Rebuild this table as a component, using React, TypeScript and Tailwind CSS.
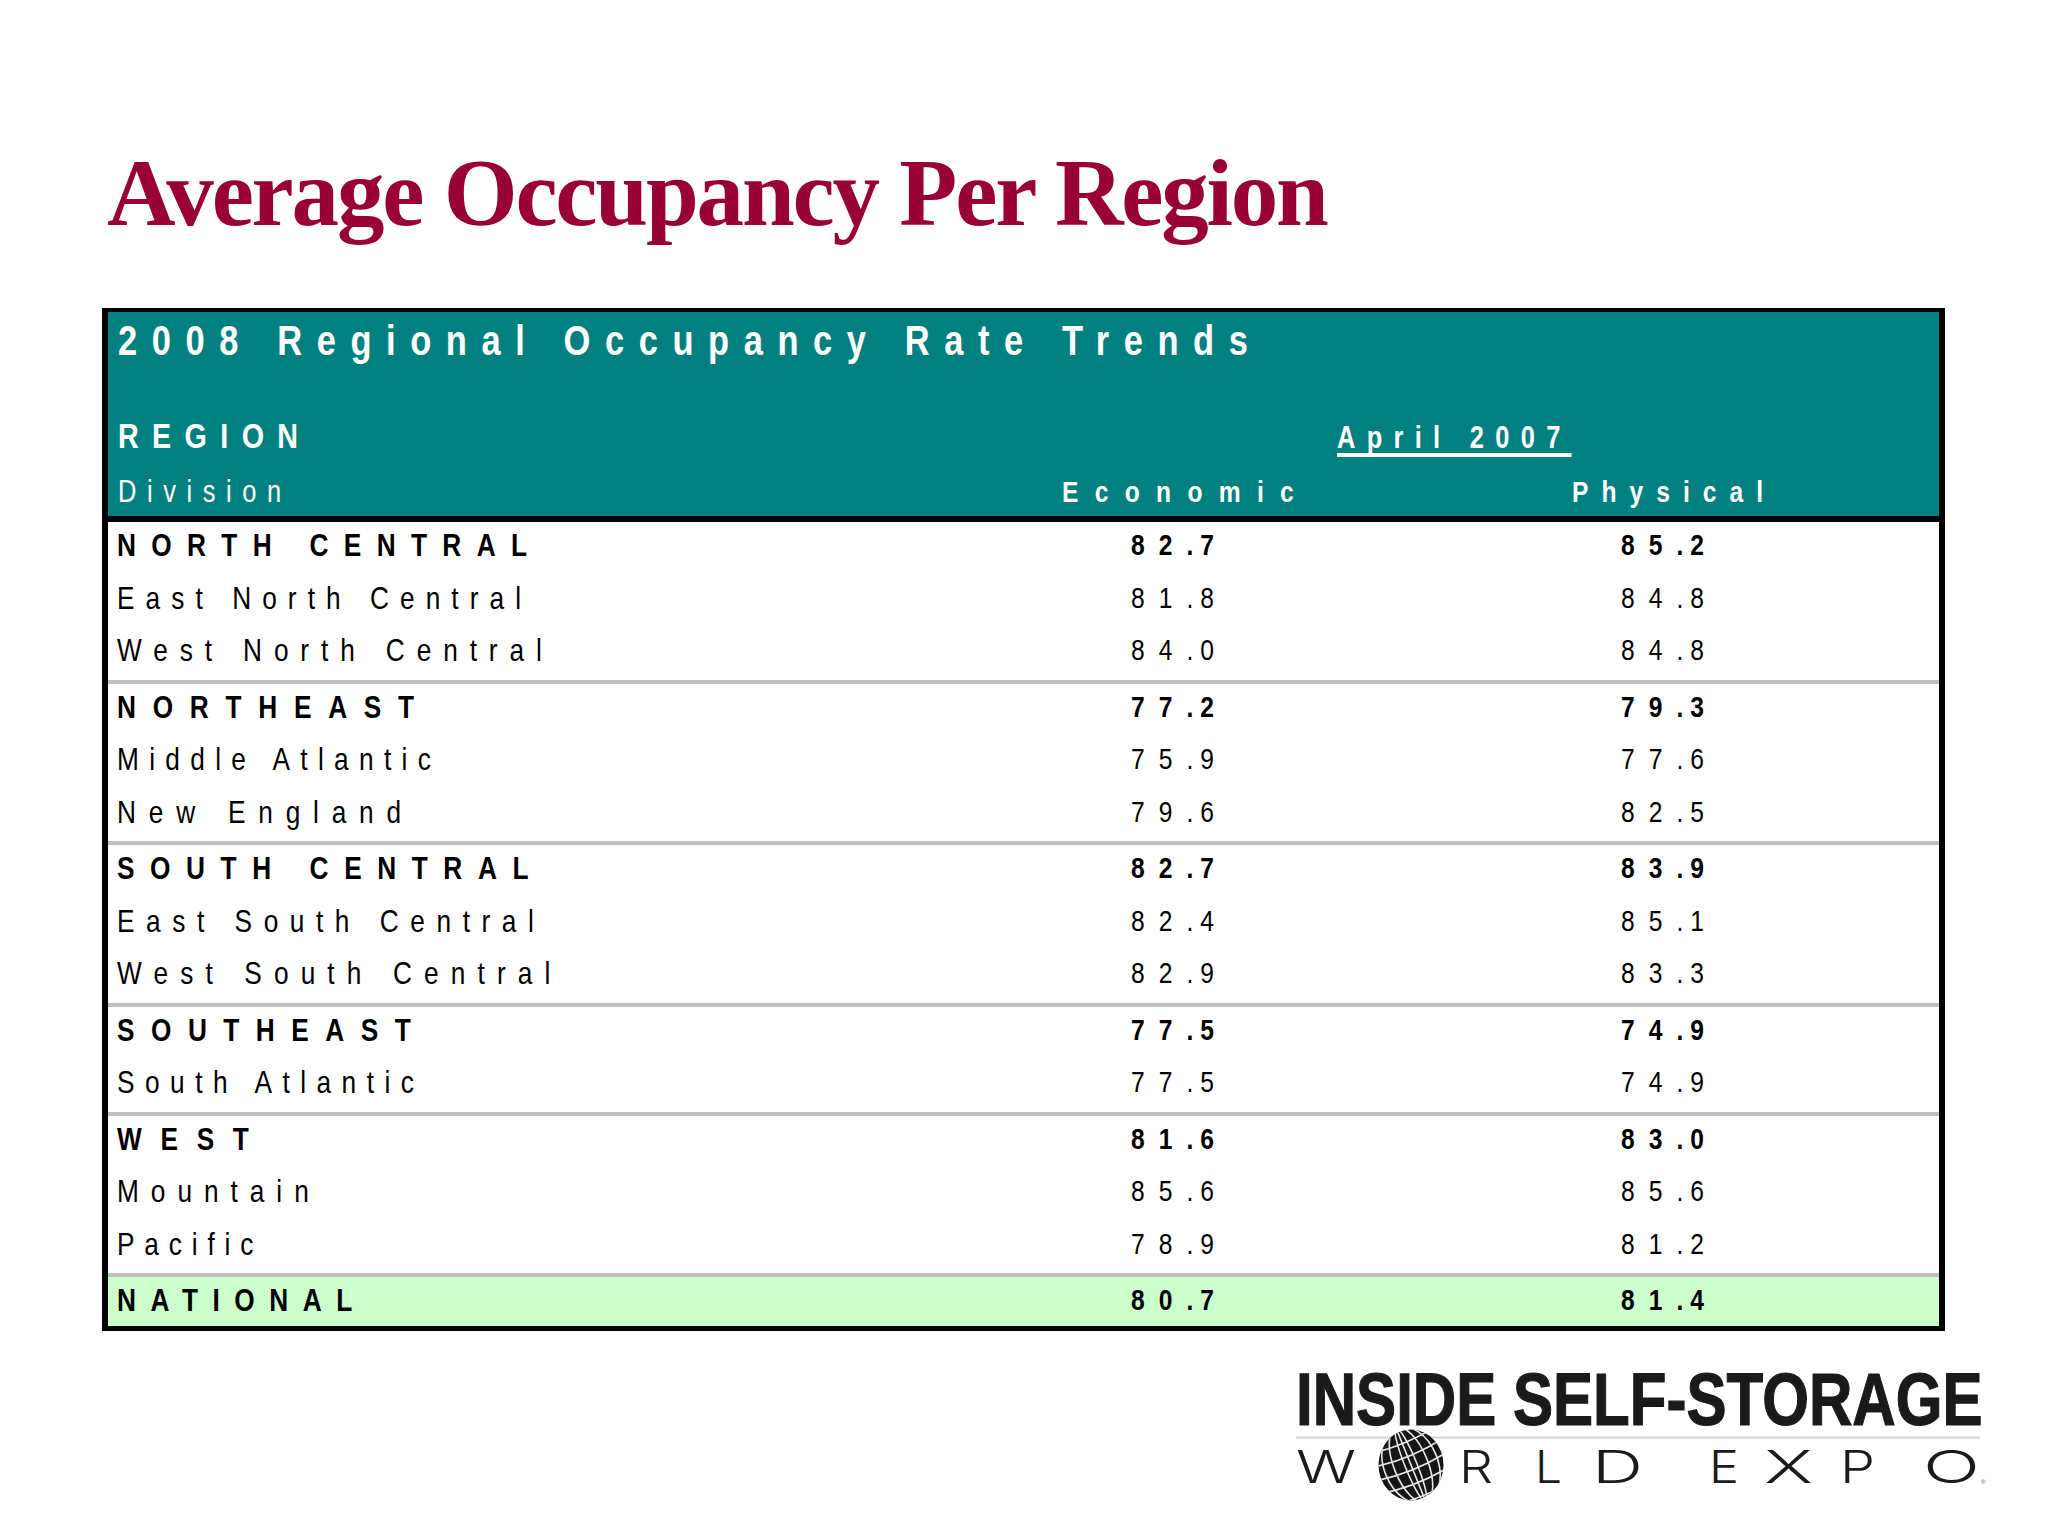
import React from "react";

type Sub = { name: string; tr: number; e: string; p: string };
type Group = { name: string; tr: number; e: string; p: string; subs: Sub[] };

const groups: Group[] = [
  {
    name: "NORTH CENTRAL", tr: 18.7, e: "82.7", p: "85.2",
    subs: [
      { name: "East North Central", tr: 13.5, e: "81.8", p: "84.8" },
      { name: "West North Central", tr: 14.5, e: "84.0", p: "84.8" },
    ],
  },
  {
    name: "NORTHEAST", tr: 20.4, e: "77.2", p: "79.3",
    subs: [
      { name: "Middle Atlantic", tr: 12.6, e: "75.9", p: "77.6" },
      { name: "New England", tr: 15.6, e: "79.6", p: "82.5" },
    ],
  },
  {
    name: "SOUTH CENTRAL", tr: 19, e: "82.7", p: "83.9",
    subs: [
      { name: "East South Central", tr: 14.1, e: "82.4", p: "85.1" },
      { name: "West South Central", tr: 14.8, e: "82.9", p: "83.3" },
    ],
  },
  {
    name: "SOUTHEAST", tr: 20.1, e: "77.5", p: "74.9",
    subs: [{ name: "South Atlantic", tr: 12.8, e: "77.5", p: "74.9" }],
  },
  {
    name: "WEST", tr: 22.8, e: "81.6", p: "83.0",
    subs: [
      { name: "Mountain", tr: 14.6, e: "85.6", p: "85.6" },
      { name: "Pacific", tr: 12, e: "78.9", p: "81.2" },
    ],
  },
];

function Num({ v }: { v: string }) {
  const [a, b] = v.split(".");
  return (
    <span className="inline-block origin-left scale-x-[0.82] text-[30px] leading-none whitespace-nowrap justify-self-start">
      <span className="tracking-[17.1px]">{a}</span>
      <span className="tracking-[8.5px]">.</span>
      {b}
    </span>
  );
}

function Row({
  label, tr, e, p, bold,
}: { label: string; tr: number; e: string; p: string; bold: boolean }) {
  return (
    <div
      className={
        bold
          ? "grid grid-cols-[1014px_490px_1fr] items-center h-[52.5px] pl-[9px] pb-[6px] font-bold text-black"
          : "grid grid-cols-[1014px_490px_1fr] items-center h-[52.5px] pl-[9px] pb-[6px] font-normal text-black"
      }
    >
      <span
        className="inline-block origin-left scale-x-[0.82] justify-self-start text-[32px] leading-none whitespace-nowrap"
        style={{ letterSpacing: `${tr}px` }}
      >
        {label}
      </span>
      <Num v={e} />
      <Num v={p} />
    </div>
  );
}

function Logo() {
  return (
    <svg width="700" height="160" viewBox="0 0 700 160">
      <defs>
        <clipPath id="globeClip">
          <ellipse cx="121" cy="115" rx="32.5" ry="35.5" />
        </clipPath>
      </defs>
      <g transform="translate(0 10)">
        <text
          transform="translate(6 65) scale(0.812 1)"
          x="0"
          y="0"
          fontFamily="'Liberation Sans',sans-serif"
          fontWeight="bold"
          fontSize="74"
          fill="#1a1a1a"
          stroke="#1a1a1a"
          strokeWidth="1.2"
        >
          INSIDE SELF-STORAGE
        </text>
        <line x1="6" y1="77.5" x2="690" y2="77.5" stroke="#d4d4d4" strokeWidth="2" />
        <g fontFamily="Inter, 'Open Sans', sans-serif" fontWeight="300" fontSize="45" fill="#1a1a1a">
          <text x="6" y="123" textLength="60" lengthAdjust="spacingAndGlyphs">W</text>
          <text x="169" y="123" textLength="34" lengthAdjust="spacingAndGlyphs">R</text>
          <text x="245" y="123" textLength="27" lengthAdjust="spacingAndGlyphs">L</text>
          <text x="302" y="123" textLength="51" lengthAdjust="spacingAndGlyphs">D</text>
          <text x="419" y="123" textLength="30" lengthAdjust="spacingAndGlyphs">E</text>
          <text x="474" y="123" textLength="49" lengthAdjust="spacingAndGlyphs">X</text>
          <text x="550" y="123" textLength="35" lengthAdjust="spacingAndGlyphs">P</text>
          <text x="633" y="123" textLength="57" lengthAdjust="spacingAndGlyphs">O</text>
        </g>
        <text x="691" y="124" fontSize="6" fill="#555" fontFamily="'Liberation Sans',sans-serif">®</text>
      </g>
      <ellipse cx="121" cy="115" rx="32.5" ry="35.5" fill="#161616" />
      <g clipPath="url(#globeClip)" stroke="#e8e8e8" strokeWidth="1.6" fill="none">
        <g transform="rotate(-22 121 115)">
          <ellipse cx="121" cy="115" rx="6" ry="40" />
          <ellipse cx="121" cy="115" rx="17" ry="40" />
          <ellipse cx="121" cy="115" rx="27" ry="40" />
          <line x1="121" y1="70" x2="121" y2="160" />
          <path d="M80 88 Q121 96 162 88" />
          <path d="M80 102 Q121 110 162 102" />
          <path d="M80 116 Q121 124 162 116" />
          <path d="M80 130 Q121 138 162 130" />
          <path d="M80 144 Q121 152 162 144" />
        </g>
      </g>
    </svg>
  );
}

export default function App() {
  return (
    <div className="w-[2048px] h-[1536px] bg-white flex flex-col overflow-hidden">
      <h1 className="ml-[107px] mt-[146px] text-[95px] leading-none font-bold tracking-[-2.2px] text-[#990033] font-['Liberation_Serif',serif] whitespace-nowrap">
        Average Occupancy Per Region
      </h1>

      <div className="ml-[102px] mt-[67px] w-[1843px] border-x-[6px] border-t-4 border-b-[5px] border-black bg-white font-['Liberation_Sans',sans-serif]">
        <div className="h-[210px] bg-[#028080] border-b-[6px] border-black text-white pl-[10px] pt-[8px]">
          <div className="inline-block origin-left scale-x-[0.82] text-[42px] leading-none font-bold tracking-[17.8px] whitespace-nowrap">
            2008 Regional Occupancy Rate Trends
          </div>
          <div className="mt-[56px] flex items-baseline">
            <div className="w-[1219px]">
              <span className="inline-block origin-left scale-x-[0.82] text-[35px] leading-none font-bold tracking-[16.3px]">
                REGION
              </span>
            </div>
            <span className="inline-block origin-left scale-x-[0.82] text-[31px] leading-none font-bold tracking-[13.8px] border-b-4 border-white whitespace-nowrap">
              April 2007
            </span>
          </div>
          <div className="mt-[19px] flex items-baseline">
            <div className="w-[944px]">
              <span className="inline-block origin-left scale-x-[0.82] text-[31px] leading-none tracking-[12.9px]">
                Division
              </span>
            </div>
            <div className="w-[510px]">
              <span className="inline-block origin-left scale-x-[0.82] text-[30px] leading-none font-bold tracking-[19.9px]">
                Economic
              </span>
            </div>
            <div>
              <span className="inline-block origin-left scale-x-[0.82] text-[30px] leading-none font-bold tracking-[15.9px]">
                Physical
              </span>
            </div>
          </div>
        </div>

        {groups.map((g) => (
          <React.Fragment key={g.name}>
            <Row label={g.name} tr={g.tr} e={g.e} p={g.p} bold />
            {g.subs.map((s) => (
              <Row key={s.name} label={s.name} tr={s.tr} e={s.e} p={s.p} bold={false} />
            ))}
            <div className="h-[4px] bg-[#c0c0c0]" />
          </React.Fragment>
        ))}

        <div className="grid grid-cols-[1014px_490px_1fr] items-center h-[49px] pl-[9px] pb-[4px] bg-[#ccffcc] font-bold text-black">
          <span className="inline-block origin-left scale-x-[0.82] justify-self-start text-[32px] leading-none whitespace-nowrap tracking-[17.7px]">
            NATIONAL
          </span>
          <Num v="80.7" />
          <Num v="81.4" />
        </div>
      </div>

      <div className="ml-[1290px] mt-[19px]">
        <Logo />
      </div>
    </div>
  );
}
